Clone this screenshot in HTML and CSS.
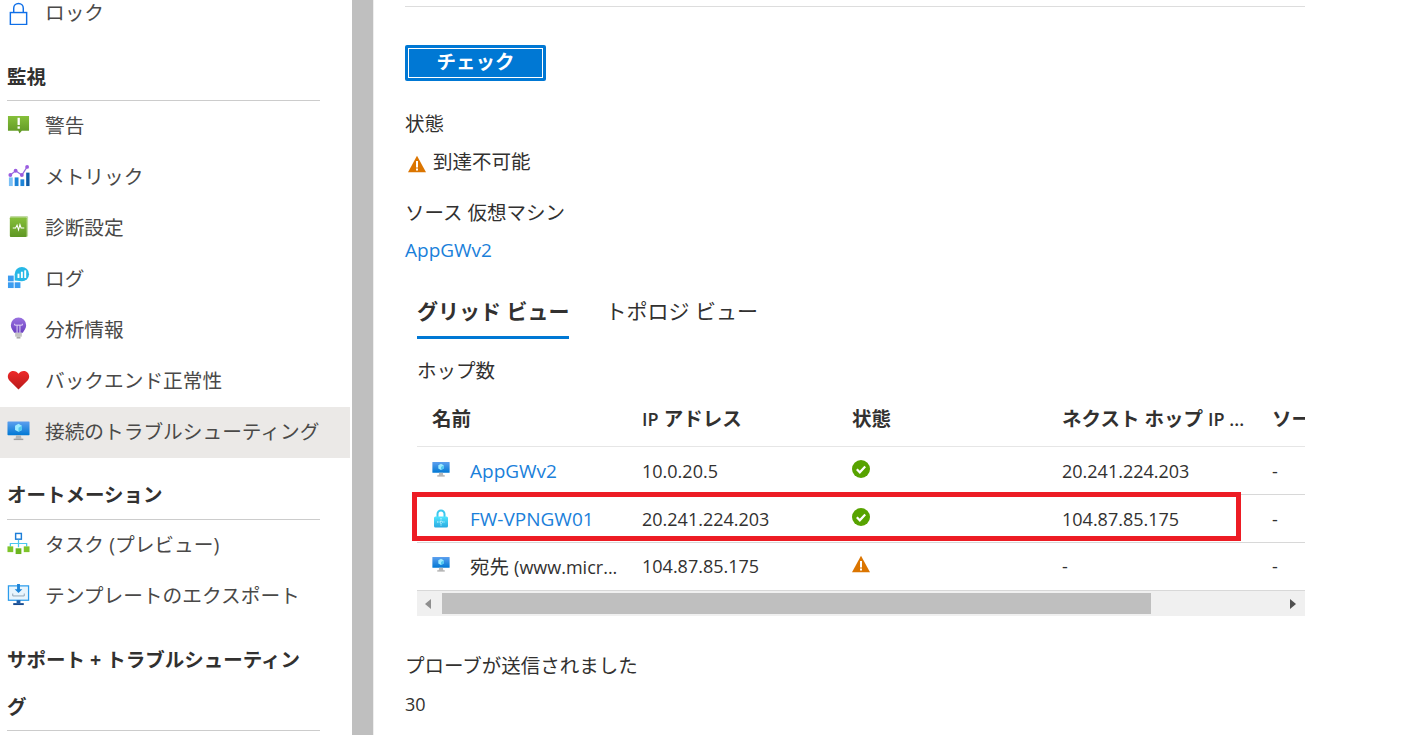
FILE: index.html
```html
<!DOCTYPE html>
<html lang="ja">
<head>
    <meta charset="UTF-8">
    <title>接続のトラブルシューティング</title>
    <link rel="stylesheet" href="styles.css">
</head>
<body>
    <svg class="defs" width="0" height="0">
        <defs>
            <linearGradient id="g-screen" x1="0" y1="0" x2="0" y2="1"><stop offset="0" stop-color="#5ea0ef"/><stop offset="1" stop-color="#0078d4"/></linearGradient>
            <linearGradient id="g-green" x1="0" y1="0" x2="0" y2="1"><stop offset="0" stop-color="#86c03a"/><stop offset="1" stop-color="#5e9624"/></linearGradient>
            <linearGradient id="g-heart" x1="0" y1="0" x2="0" y2="1"><stop offset="0" stop-color="#ee2a2a"/><stop offset="1" stop-color="#b81a1a"/></linearGradient>
            <linearGradient id="g-bulb" x1="0" y1="0" x2="0" y2="1"><stop offset="0" stop-color="#9a72e0"/><stop offset="1" stop-color="#6a3fc0"/></linearGradient>
            <linearGradient id="g-lock" x1="0" y1="0" x2="0" y2="1"><stop offset="0" stop-color="#50e6ff"/><stop offset="1" stop-color="#29a9e0"/></linearGradient>
            <symbol id="i-vm" viewBox="0 0 24 24">
                <rect x="0.5" y="2.5" width="23" height="14.5" rx="0.7" fill="url(#g-screen)"/>
                <path d="M12 5l3.6 2v4.4L12 13.4l-3.6-2V7z" fill="#9cebff"/>
                <path d="M12 9.2l3.6-2.2v4.4L12 13.4z" fill="#50c8f0"/>
                <path d="M9.5 17h5l.6 3.5H8.900z" fill="#b8b8b8"/>
                <rect x="7" y="20.500" width="10" height="1.500" fill="#a0a0a0"/>
            </symbol>
            <symbol id="i-ok" viewBox="0 0 18 18">
                <circle cx="9" cy="9" r="9" fill="#57a300"/>
                <path d="M4.800 9.300l3 3 5.400-5.700" fill="none" stroke="#fff" stroke-width="2.200"/>
            </symbol>
            <symbol id="i-warn" viewBox="0 0 18 18">
                <path d="M9 .8L18 17.200H0z" fill="#db7500"/>
                <rect x="8" y="6" width="2" height="6.500" fill="#fff"/>
                <rect x="8" y="13.500" width="2" height="2" fill="#fff"/>
            </symbol>
        </defs>
    </svg>

    <div class="page">
        <aside class="sidebar">
            <a class="nav-item nav-first">
                <svg class="nav-icon" viewBox="0 0 24 24"><path d="M7 11V6.500a5 5 0 0 1 10 0V11" fill="none" stroke="#0f6fe8" stroke-width="1.500"/><rect x="3.500" y="11" width="17" height="12.500" fill="#fff" stroke="#0f6fe8" stroke-width="1.500"/></svg>
                ロック
            </a>
            <h3 class="nav-head">監視</h3>
            <a class="nav-item">
                <svg class="nav-icon" viewBox="0 0 24 24"><path d="M1 3h22v15.500H15.500l-2.500 3-1.200-3H1z" fill="url(#g-green)"/><rect x="11" y="5" width="2.400" height="7.500" fill="#fff"/><rect x="11" y="14" width="2.400" height="2.400" fill="#fff"/></svg>
                警告
            </a>
            <a class="nav-item">
                <svg class="nav-icon" viewBox="0 0 24 24"><rect x="2" y="14" width="4" height="9" fill="#7cc0f5"/><rect x="8" y="14" width="4" height="9" fill="#1d84d8"/><rect x="14" y="16" width="4" height="7" fill="#1d84d8"/><rect x="20" y="9" width="3.500" height="14" fill="#0f5ba7"/><path d="M3.500 11.500L9 7l6.500 4.500L21 3" fill="none" stroke="#9a6be0" stroke-width="1.300"/><circle cx="3.500" cy="11.500" r="2" fill="#9a5ce0"/><circle cx="9" cy="7" r="2" fill="#9a5ce0"/><circle cx="15.500" cy="11.500" r="2" fill="#9a5ce0"/><circle cx="21" cy="3" r="2" fill="#9a5ce0"/></svg>
                メトリック
            </a>
            <a class="nav-item">
                <svg class="nav-icon" viewBox="0 0 24 24"><rect x="3" y="1" width="19" height="22" rx="1.500" fill="#c3dba4"/><rect x="3" y="2.500" width="17.500" height="20.500" rx="1" fill="url(#g-green)"/><path d="M6 13.500h3l1.500-3 1.500 5 1.500-5.500 1.200 3.500H18" fill="none" stroke="#fff" stroke-width="1.100"/></svg>
                診断設定
            </a>
            <a class="nav-item">
                <svg class="nav-icon" viewBox="0 0 24 24"><rect x="1" y="10" width="6" height="6" fill="#3b9cf0"/><rect x="1" y="17" width="6" height="6" fill="#3b9cf0"/><rect x="8" y="17" width="6" height="6" fill="#3b9cf0"/><path d="M8 15V8.500a7.500 7.500 0 1 1 7.500 7.500z" fill="#26b8e6"/><rect x="11" y="8" width="2" height="4.500" fill="#fff"/><rect x="14.500" y="6" width="2" height="6.500" fill="#fff"/><rect x="18" y="4.500" width="2" height="8" fill="#fff"/></svg>
                ログ
            </a>
            <a class="nav-item">
                <svg class="nav-icon" viewBox="0 0 24 24"><path d="M12 .5a8 8 0 0 1 8 8c0 3.500-2.500 5.500-3.500 8h-9c-1-2.500-3.500-4.500-3.500-8a8 8 0 0 1 8-8z" fill="url(#g-bulb)"/><path d="M8 7v1.500h8V7M10.500 8.500v8M13.500 8.500v8" fill="none" stroke="#e6dcf8" stroke-width="1"/><rect x="8.500" y="16.500" width="7" height="4" fill="#c4c4c4"/><rect x="10" y="20.500" width="4" height="2" fill="#a8a8a8"/></svg>
                分析情報
            </a>
            <a class="nav-item">
                <svg class="nav-icon" viewBox="0 0 24 24"><path d="M12 22.500L2.500 13C-1 9 1.500 3 6.500 3c2.500 0 4.300 1.200 5.500 3 1.200-1.800 3-3 5.500-3 5 0 7.500 6 4 10z" fill="url(#g-heart)"/></svg>
                バックエンド正常性
            </a>
            <a class="nav-item nav-selected">
                <svg class="nav-icon" viewBox="0 0 24 24"><use href="#i-vm"/></svg>
                接続のトラブルシューティング
            </a>
            <h3 class="nav-head nav-head-tight">オートメーション</h3>
            <a class="nav-item">
                <svg class="nav-icon" viewBox="0 0 24 24"><rect x="9" y="1.500" width="6" height="6" fill="#fff" stroke="#1d7ed8" stroke-width="1.500"/><path d="M12 8v4M3.500 15v-3h17v3M12 12v4" fill="none" stroke="#4cc8f0" stroke-width="1.300"/><rect x="0.500" y="15" width="6" height="6" fill="#7ec42a"/><rect x="9" y="17" width="6" height="6" fill="#6bb51f"/><rect x="17.500" y="15" width="6" height="6" fill="#7ec42a"/></svg>
                タスク (プレビュー)
            </a>
            <a class="nav-item">
                <svg class="nav-icon" viewBox="0 0 24 24"><rect x="1.500" y="3" width="21" height="15" fill="#e8f5fd" stroke="#2b9cec" stroke-width="1.300"/><path d="M10.500 1h3v5.500H16l-4 4-4-4h2.500z" fill="#1d84d8"/><path d="M6 11v2.500h12V11" fill="none" stroke="#90a4b4" stroke-width="1"/><rect x="10" y="18" width="4" height="3" fill="#1d5ba7"/><rect x="6.500" y="21" width="11" height="2" fill="#164a90"/></svg>
                テンプレートのエクスポート
            </a>
            <h3 class="nav-head nav-head-long"><span>サポート + トラブルシューティング</span></h3>
        </aside>

        <div class="splitter"></div>

        <main class="main">
            <button class="check-btn" type="button"><span>チェック</span></button>

            <div class="label">状態</div>
            <div class="value status"><svg class="status-icon" viewBox="0 0 18 18"><use href="#i-warn"/></svg>到達不可能</div>
            <div class="label">ソース 仮想マシン</div>
            <div class="value value-link"><a class="link">AppGWv2</a></div>

            <div class="tabs">
                <a class="tab tab-active">グリッド ビュー</a>
                <a class="tab">トポロジ ビュー</a>
            </div>
            <div class="hops-label">ホップ数</div>

            <div class="grid-wrap">
                <div class="grid-clip">
                    <table class="hops">
                        <thead>
                            <tr>
                                <th>名前</th>
                                <th><span class="latin">IP</span> アドレス</th>
                                <th>状態</th>
                                <th>ネクスト ホップ <span class="latin">IP ...</span></th>
                                <th>ソース</th>
                            </tr>
                        </thead>
                        <tbody>
                            <tr>
                                <td><div class="name-cell"><svg class="row-icon" viewBox="0 0 24 24"><use href="#i-vm"/></svg><a class="link">AppGWv2</a></div></td>
                                <td>10.0.20.5</td>
                                <td><svg class="state-icon" viewBox="0 0 18 18"><use href="#i-ok"/></svg></td>
                                <td>20.241.224.203</td>
                                <td>-</td>
                            </tr>
                            <tr>
                                <td><div class="name-cell"><svg class="row-icon row-icon-lock" viewBox="0 0 18 20"><path d="M5.500 9V6a3.500 3.500 0 0 1 7 0v3" fill="none" stroke="#3cc8ee" stroke-width="2"/><rect x="2" y="8.500" width="14" height="11" rx="1.500" fill="url(#g-lock)"/><path d="M9 10v8M5 14h8" stroke="#d8f6ff" stroke-width="1" stroke-dasharray="1.500 1"/></svg><a class="link">FW-VPNGW01</a></div></td>
                                <td>20.241.224.203</td>
                                <td><svg class="state-icon" viewBox="0 0 18 18"><use href="#i-ok"/></svg></td>
                                <td>104.87.85.175</td>
                                <td>-</td>
                            </tr>
                            <tr class="row-last">
                                <td><div class="name-cell"><svg class="row-icon" viewBox="0 0 24 24"><use href="#i-vm"/></svg><span>宛先 <span class="latin">(www.micr...</span></span></div></td>
                                <td>104.87.85.175</td>
                                <td><svg class="state-icon" viewBox="0 0 18 18"><use href="#i-warn"/></svg></td>
                                <td>-</td>
                                <td>-</td>
                            </tr>
                        </tbody>
                    </table>
                </div>
                <div class="hscroll">
                    <span class="arrow arrow-left"></span>
                    <div class="thumb"></div>
                    <span class="arrow arrow-right"></span>
                </div>
                <div class="red-box"></div>
            </div>

            <div class="label probes-label">プローブが送信されました</div>
            <div class="value latin">30</div>
        </main>
    </div>
</body>
</html>
```

FILE: styles.css
```css
html, body {
    margin: 0;
    padding: 0;
    height: 735px;
    overflow: hidden;
    background-color: #fff;
}
body {
    font-family: "Open Sans", "Noto Sans CJK JP", sans-serif;
    font-size: 19.5px;
    color: #323130;
}
.defs {
    position: absolute;
}
.latin {
    font-size: 18px;
}
.page {
    display: flex;
    height: 735px;
}

/* left menu, scrolled so the lock row is cut off */
.sidebar {
    width: 351px;
    flex-shrink: 0;
    margin-top: -13px;
}
.nav-item {
    display: flex;
    align-items: center;
    height: 51px;
    box-sizing: border-box;
    padding: 0 0 4px 7px;
    font-size: 19.7px;
    color: #4a4948;
}
.nav-first {
    padding-bottom: 2px;
}
.nav-first .nav-icon {
    margin-top: 4px;
}
.nav-selected {
    background-color: #ebe9e7;
    margin-right: 1px;
}
.nav-icon {
    width: 23px;
    height: 23px;
    margin-right: 15px;
    flex-shrink: 0;
}
.nav-head {
    margin: 13px 31px 0 7px;
    padding-top: 3px;
    height: 46px;
    line-height: 46px;
    font-size: 19.5px;
    font-weight: bold;
    color: #323130;
    border-bottom: 1px solid #ccc;
}
.nav-head-tight {
    margin-top: 10px;
    height: 48px;
    line-height: 48px;
}
.nav-head-long {
    margin-top: 14px;
    padding-top: 0;
    height: auto;
    line-height: 47px;
}
.nav-head-long span {
    display: block;
    width: 303px;
}
.splitter {
    width: 21px;
    margin-left: 1px;
    background-color: #bfbfbf;
    border-right: 1px solid #eee;
    flex-shrink: 0;
}

/* main blade */
.main {
    width: 900px;
    margin-left: 31px;
    padding-top: 6px;
    background: linear-gradient(#ddd, #ddd) no-repeat 0 6px / 100% 1px;
}
.check-btn {
    display: block;
    width: 141px;
    height: 36px;
    margin: 39px 0 24px;
    padding: 3px;
    background-color: #0078d4;
    border: none;
    border-radius: 2px;
    font-family: inherit;
}
.check-btn span {
    display: block;
    height: 100%;
    line-height: 25px;
    border: 1px solid #fff;
    box-sizing: border-box;
    color: #fff;
    font-size: 19.5px;
    font-weight: bold;
}
.label {
    line-height: 38px;
    height: 38px;
}
.value {
    line-height: 38px;
    height: 38px;
    margin-bottom: 13px;
}
.value-link {
    line-height: 36px;
}
.status {
    display: flex;
    align-items: center;
}
.status-icon {
    width: 18px;
    height: 18px;
    margin: 3px 7px 0 3px;
}
.link {
    color: #1a80da;
    font-size: 19px;
    text-decoration: none;
}
.tabs {
    display: flex;
    gap: 36px;
    margin: 15px 0 0 12px;
}
.tab {
    height: 51px;
    line-height: 52px;
    font-size: 21px;
    border-bottom: 3px solid transparent;
}
.tab-active {
    font-weight: bold;
    border-bottom-color: #0078d4;
}
.hops-label {
    margin: 13px 0 6px 12px;
    height: 38px;
    line-height: 38px;
}

/* hops grid */
.grid-wrap {
    position: relative;
    margin-left: 12px;
    width: 888px;
}
.grid-clip {
    overflow: hidden;
}
.hops {
    table-layout: fixed;
    width: 1065px;
    border-collapse: collapse;
}
.hops th {
    width: 210px;
    height: 42px;
    padding: 0 0 8px 0;
    text-align: left;
    font-weight: bold;
    white-space: nowrap;
    overflow: hidden;
    border-bottom: 1px solid #e6e6e6;
}
.hops th .latin {
    font-weight: 600;
}
.hops td {
    height: 47px;
    padding: 0;
    font-size: 18px;
    white-space: nowrap;
    border-bottom: 1px solid #d8d8d8;
}
.row-last td {
    padding-bottom: 2px;
    height: 45px;
}
.hops th:first-child, .hops td:first-child {
    width: 210px;
    padding-left: 15px;
}
.name-cell {
    display: flex;
    align-items: center;
    font-size: 19.5px;
}
.row-icon {
    width: 18px;
    height: 18px;
    margin: -4px 20px 0 0;
    flex-shrink: 0;
}
.row-icon-lock {
    height: 20px;
    margin-top: -2px;
}
.state-icon {
    display: block;
    width: 18px;
    height: 18px;
    margin-top: -3px;
}
.hscroll {
    display: flex;
    align-items: center;
    height: 25px;
    background-color: #f0f0f0;
}
.thumb {
    width: 709px;
    height: 21px;
    background-color: #bfbfbf;
}
.arrow {
    width: 0;
    height: 0;
    border-top: 5px solid transparent;
    border-bottom: 5px solid transparent;
}
.arrow-left {
    margin: 0 11px 0 8px;
    border-right: 6px solid #8f8f8f;
}
.arrow-right {
    margin-left: 139px;
    border-left: 6px solid #505050;
}
.red-box {
    position: absolute;
    left: -5px;
    top: 96px;
    width: 829px;
    height: 49px;
    box-sizing: border-box;
    border: 5px solid #ed1c24;
}
.probes-label {
    margin-top: 31px;
}
```
